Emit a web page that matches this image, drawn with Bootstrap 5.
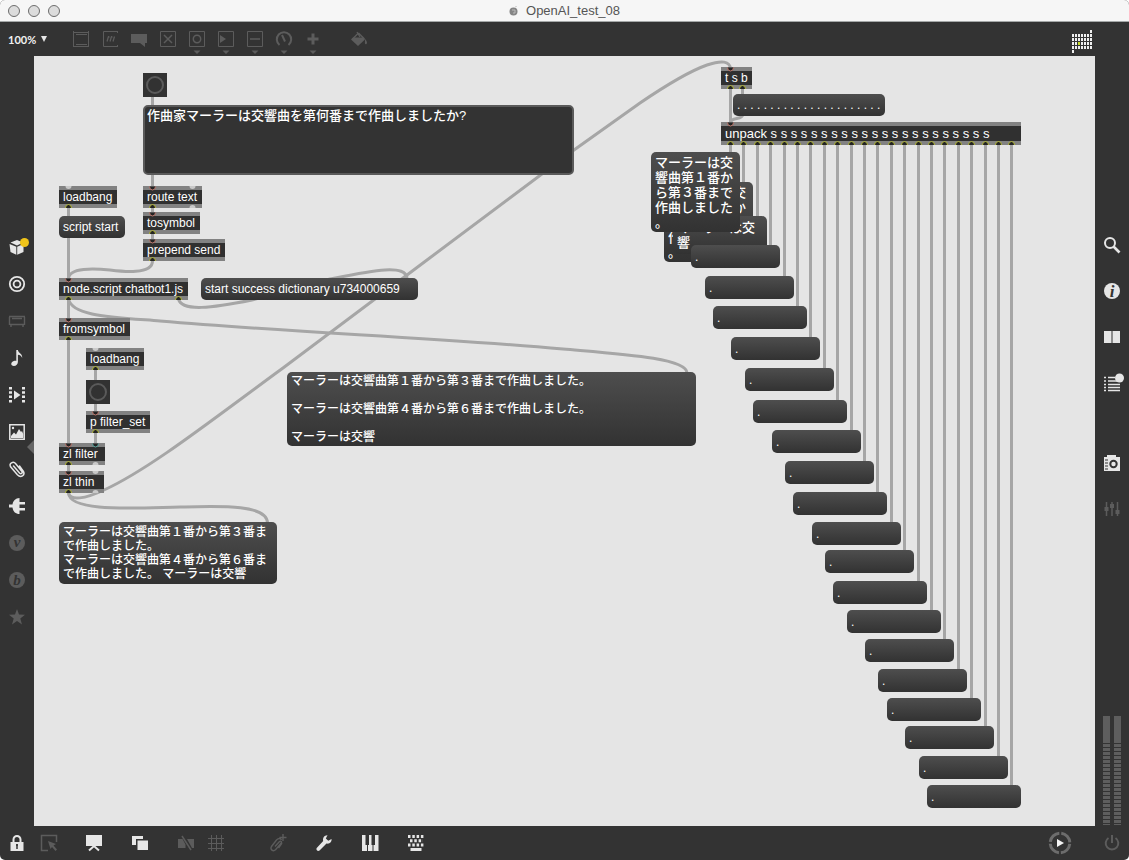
<!DOCTYPE html>
<html lang="ja">
<head>
<meta charset="utf-8">
<meta name="viewport" content="width=device-width, initial-scale=1">
<title>OpenAI_test_08</title>
<link href="https://cdn.jsdelivr.net/npm/bootstrap@5.3.0/dist/css/bootstrap.min.css" rel="stylesheet">
<style>
  :root { --chrome: #333333; --on: #e6e6e6; --off: #5c5c5c; --cord: #a6a6a6; }
  body { background: #fff; font-family: "Liberation Sans", "Noto Sans CJK JP", sans-serif; font-size: 12px; }
  .patch-window { background: var(--chrome); border-radius: 5px; overflow: hidden; }
  .title-strip { height: 22px; background: #f6f6f6; border-bottom: 1px solid #a5a8a8; font-size: 13px; color: #555; }
  .lights { left: 8px; top: 5px; }
  .light { width: 12px; height: 12px; border-radius: 50%; background: #dcdcdc; border: 1px solid #6c6c6c; padding: 0; }
  .tool-strip, .foot-strip { height: 34px; color: var(--on); }
  .foot-strip { padding: 0 2px; }
  .side-strip { width: 34px; color: var(--on); }
  .left-strip { padding-bottom: 18px; }
  .right-strip { padding-top: 166px; }
  .ib { border: 0; background: none; padding: 0; color: inherit; display: flex; align-items: center; justify-content: center; flex: none; }
  .ib.dim { color: var(--off); }
  .ib text { font-family: "Liberation Serif", serif; font-weight: bold; font-style: italic; text-anchor: middle; }
  .tool-strip .ib { width: 29px; height: 34px; }
  .foot-strip .ib { width: 30px; height: 34px; }
  .left-strip .ib { width: 34px; height: 37px; }
  .right-strip .ib { width: 34px; height: 46px; }
  .zoom-pick { width: 66px; padding-left: 8px; gap: 4px; }
  .zoom-pick select { appearance: none; border: 0; background: transparent; color: #f2f2f2; font: bold 11px Lato, sans-serif; padding: 0; width: 29px; }
  .fill-tool { margin-left: 17px; }
  .tool-strip .grid-logo { margin-right: 32px; padding-top: 5px; }
  .notch { right: 0; top: 384px; }
  .cam-gap { margin-top: 34px; }
  .levels { gap: 4px; margin-bottom: 1px; }
  .level { width: 7px; height: 109px; background: linear-gradient(#5e5e5e 24px, transparent 24px), repeating-linear-gradient(#5e5e5e 0 3px, var(--chrome) 3px 4px); }
  .lock-gap { margin-left: 2px; }
  .notes-gap { margin-left: 15px; }
  .wide-gap { margin-left: 16px; }
  .clip-gap { margin-left: 32px; }
  .play-gap { margin-right: 22px; }
  .patcher { background: #e5e5e5; }
  .patcher svg.layer { left: 0; top: 0; width: 100%; height: 100%; pointer-events: none; }
  .cord { fill: none; stroke: var(--cord); stroke-width: 3; }
  .node { position: absolute; color: #fff; font-weight: 500; white-space: pre; text-align: left; overflow: hidden; }
  .obj { background: #303030; border: solid #828282; border-width: 4px 0; padding: 0 4px; line-height: 15px; }
  .msg { border: 0; border-radius: 5px; background: linear-gradient(#4e4e4e, #323232); padding: 0 4px; line-height: 14px; }
  .f13 { font-size: 13px; line-height: 15px; }
  .bang { background: #323232; border: 0; padding: 3px; }
  .bang::before { content: ""; display: block; width: 18px; height: 18px; border: 2px solid #5a5a5a; border-radius: 50%; }
  .edit { background: #333; border: 2px solid #5a5a5a; border-radius: 5px; padding: 1px 2px; font-size: 13px; line-height: 15px; resize: none; }
</style>
<script src="https://cdn.jsdelivr.net/npm/bootstrap@5.3.0/dist/js/bootstrap.bundle.min.js"></script>
</head>
<body>
<div class="patch-window d-flex flex-column min-vh-100">

  <header class="title-strip position-relative d-flex align-items-center justify-content-center flex-shrink-0">
    <div class="lights position-absolute d-flex gap-2">
      <button class="light" aria-label="Close"></button>
      <button class="light" aria-label="Minimise"></button>
      <button class="light" aria-label="Zoom"></button>
    </div>
    <svg class="me-2" width="9" height="10" viewBox="0 0 9 10" aria-hidden="true"><circle cx="4.500" cy="5.500" r="4" fill="#858585"/><path d="M3 4h3v3H4" fill="none" stroke="#bbb"/><path d="M6 1l2-1" stroke="#ccc"/></svg>
    <span>OpenAI_test_08</span>
  </header>

  <nav class="tool-strip d-flex align-items-center flex-shrink-0" aria-label="Objects">
    <label class="zoom-pick d-flex align-items-center"><select aria-label="Zoom level"><option>100%</option></select><svg width="6" height="6" viewBox="0 0 6 6" aria-hidden="true"><path d="M0 0h6L3 6z" fill="currentColor"/></svg></label>
    <button class="ib dim" aria-label="Object"><svg width="18" height="26" viewBox="0 0 18 26" fill="none" stroke="currentColor"><path d="M1.500 5v16M1 6.500h16M16.500 5v16M1 20.500h16M4 8.500h11M4 18.500h11"/></svg></button>
    <button class="ib dim" aria-label="Message"><svg width="18" height="26" viewBox="0 0 18 26" fill="none" stroke="currentColor"><path d="M17 5.500H2.500v15H17M16.500 5v2M16.500 19v2"/><path d="M6 15.500l1.500-5M9 15.500l1.500-5M12 15.500l1.500-5M7 11h1.500M10 11h1.500" stroke-width="1.300"/></svg></button>
    <button class="ib dim" aria-label="Comment"><svg width="18" height="26" viewBox="0 0 18 26" fill="currentColor"><path d="M1 8h16v9h-2v4l-5-4H1z"/></svg></button>
    <button class="ib dim" aria-label="Toggle"><svg width="18" height="26" viewBox="0 0 18 26" fill="none" stroke="currentColor"><path d="M1.500 5.500h15v15h-15z"/><path d="M5 9l8 8M13 9l-8 8" stroke-width="1.500"/></svg></button>
    <button class="ib dim" aria-label="Button"><svg width="18" height="32" viewBox="0 0 18 32" fill="none" stroke="currentColor"><path d="M1.500 8.500h15v15h-15z"/><circle cx="9" cy="16" r="3.700" stroke-width="1.500"/><path d="M5.500 27.500h7L9 31z" fill="currentColor" stroke="none"/></svg></button>
    <button class="ib dim" aria-label="Playback"><svg width="18" height="32" viewBox="0 0 18 32" fill="none" stroke="currentColor"><path d="M1.500 8.500h15v15h-15z"/><path d="M3 12l6 4-6 4zM5.500 27.500h7L9 31z" fill="currentColor" stroke="none"/></svg></button>
    <button class="ib dim" aria-label="Slider"><svg width="18" height="32" viewBox="0 0 18 32" fill="none" stroke="currentColor"><path d="M1.500 8.500h15v15h-15z"/><path d="M4 16h10" stroke-width="1.500"/><path d="M5.500 27.500h7L9 31z" fill="currentColor" stroke="none"/></svg></button>
    <button class="ib dim" aria-label="Dial"><svg width="18" height="32" viewBox="0 0 18 32" fill="none" stroke="currentColor"><path d="M4.500 22a7.200 7.200 0 1 1 9 0" stroke-width="2"/><path d="M7 12l3 6.500" stroke-width="2"/><path d="M5.500 27.500h7L9 31z" fill="currentColor" stroke="none"/></svg></button>
    <button class="ib dim" aria-label="Add"><svg width="18" height="32" viewBox="0 0 18 32" fill="none" stroke="currentColor"><path d="M9 10.500v11M3.500 16h11" stroke-width="3"/><path d="M5.500 27.500h7L9 31z" fill="currentColor" stroke="none"/></svg></button>
    <button class="ib dim fill-tool" aria-label="Format"><svg width="18" height="18" viewBox="0 0 18 18"><path d="M1 9.500l2-2h10l2 2-7 6.500z" fill="currentColor"/><path d="M8.500 3L2 9.500M8.500 3l6 6M7 2l3 5" fill="none" stroke="currentColor" stroke-width="1.300"/><path d="M15 9c2 2 2.500 4 1.500 5s-2-.5-1.500-2z" fill="currentColor"/></svg></button>
    <button class="ib grid-logo ms-auto" aria-label="Package"><svg width="21" height="24" viewBox="0 0 21 24" fill="#efefef"><g id="logoDots"></g></svg></button>
  </nav>

  <div class="d-flex flex-grow-1">
    <nav class="side-strip left-strip position-relative d-flex flex-column justify-content-center flex-shrink-0" aria-label="Browsers">
      <button class="ib" aria-label="Packages"><svg width="24" height="20" viewBox="0 0 24 20"><path d="M5.500 5.500L12 3l6 2.500-6 3zM4.500 7l6.800 2.800v8L5.500 15zM18.500 7l-6.300 2.800v8L18.500 15z" fill="currentColor"/><circle cx="19.500" cy="5.500" r="4.500" fill="#f0c419"/></svg></button>
      <button class="ib" aria-label="Objects"><svg width="18" height="18" viewBox="0 0 18 18" fill="none" stroke="currentColor" stroke-width="1.800"><circle cx="9" cy="9" r="7.200"/><circle cx="9" cy="9" r="3.400"/></svg></button>
      <button class="ib dim" aria-label="Beap"><svg width="18" height="18" viewBox="0 0 18 18" fill="none" stroke="currentColor"><path d="M1 4.500h16M1.500 5v8M16.500 5v8M2 12.500h14M4 6.500h10M3 13v2M15 13v2" stroke-width="1.400"/></svg></button>
      <button class="ib" aria-label="Audio"><svg width="18" height="18" viewBox="0 0 18 18"><path d="M8.300 1h1.600c.3 3 4.800 3.500 4.300 8-.7-2.200-2-3-4.300-3.300V13c0 2.300-1.800 4-4 4-3.500 0-3.500-4 0-5 .8-.3 1.800-.3 2.400 0z" fill="currentColor"/></svg></button>
      <button class="ib" aria-label="Video"><svg width="18" height="18" viewBox="0 0 18 18"><path d="M2.500 1v17M15.500 1v17" fill="none" stroke="currentColor" stroke-width="3" stroke-dasharray="2.500 1.800"/><path d="M6 4.500l6.500 4.500L6 13.500z" fill="currentColor"/></svg></button>
      <button class="ib" aria-label="Images"><svg width="18" height="18" viewBox="0 0 18 18"><path d="M1.800 1.800h14.400v14.400H1.800z" fill="none" stroke="currentColor" stroke-width="1.500"/><path d="M3 15v-2l3-3.500 2 2L11 6l2 3 1-1 1.200 3v4z" fill="currentColor"/><circle cx="5" cy="5" r="1.200" fill="currentColor"/></svg></button>
      <button class="ib" aria-label="Clippings"><svg width="18" height="18" viewBox="0 0 18 18" fill="none" stroke="currentColor" stroke-width="1.500" stroke-linecap="round"><path d="M5.500 6l6 7c1.500 1.500 3.500 0 2.300-1.700L7.500 3.500C5.500 1 .5 3 2.600 6.800l6.800 8c3.500 3.500 8 .5 6-3.500L11.500 6"/></svg></button>
      <button class="ib" aria-label="Plug-ins"><svg width="18" height="18" viewBox="0 0 18 18" fill="currentColor"><path d="M1 7.500h3.500C5 4 7.500 1 11.500 1v4H17v2.500h-5.500v3.500H17v2.500h-5.500V17c-4 0-6.500-2.500-7-6.500H1z"/></svg></button>
      <button class="ib dim" aria-label="Vizzie"><svg width="18" height="18" viewBox="0 0 18 18"><circle cx="9" cy="9" r="8" fill="currentColor"/><text x="9" y="13" font-size="15" fill="#333">v</text></svg></button>
      <button class="ib dim" aria-label="Modules"><svg width="18" height="18" viewBox="0 0 18 18"><circle cx="9" cy="9" r="8" fill="currentColor"/><text x="9" y="14" font-size="15" fill="#333">b</text></svg></button>
      <button class="ib dim" aria-label="Favourites"><svg width="18" height="18" viewBox="0 0 18 18" fill="currentColor"><path d="M9 1l2 5.500 6 .3-4.700 3.700 1.700 5.900-5-3.400-5 3.400 1.700-5.900L1 6.800l6-.3z"/></svg></button>
      <button class="ib notch position-absolute w-auto h-auto dim" aria-label="Open browser"><svg width="7" height="14" viewBox="0 0 7 14"><path d="M7 0v14L0 7z" fill="#666"/></svg></button>
    </nav>

    <main class="patcher position-relative flex-grow-1" id="patcher">
      <svg class="layer position-absolute" aria-hidden="true"><g id="cords" transform="translate(-34 -56)">
        <path class="cord" d="M152.500 97v8M152.500 175v12M152.500 207v6M152.500 233v7"/>
        <path class="cord" d="M152.500 261C152.500 275 122 271.500 110 270C95 268.500 68.500 267 68.500 279"/>
        <path class="cord" d="M68.500 207v72M68.500 299v20M68.500 339v105M68.500 464v8"/>
        <path class="cord" d="M95.500 369v12M95.500 404v8M95.500 432v12"/>
        <path class="cord" d="M178.500 299C182 312 212 308 252 300L330 279C370 271 407 263 407 279"/>
        <path class="cord" d="M68.500 299C72 316 110 317 160 321C300 333 430 337 563 349C620 354 687 358 687 373"/>
        <path class="cord" d="M68.500 493C70 501 85 499 104 490C150 469 213 419 283 368L427 260L574 150L640 103C665 86 690 71 707 65C722 60 730 61 730.500 69"/>
        <path class="cord" d="M68.500 493C70 512 130 508 180 507C220 506 267 504 267.500 523"/>
        <path class="cord" d="M730.500 88v36M742.500 88v8M742.500 115C742.500 120 731 117 731 122"/>
      </g></svg>
      <div id="nodes"></div>
      <svg class="layer position-absolute" aria-hidden="true"><g id="ports" transform="translate(-34 -56)"></g></svg>
    </main>

    <nav class="side-strip right-strip d-flex flex-column align-items-center flex-shrink-0" aria-label="Panels">
      <button class="ib" aria-label="Search"><svg width="18" height="18" viewBox="0 0 18 18" fill="none" stroke="currentColor"><circle cx="7" cy="7" r="5" stroke-width="2"/><path d="M10.500 10.500l6 6" stroke-width="2.600"/></svg></button>
      <button class="ib" aria-label="Inspector"><svg width="18" height="18" viewBox="0 0 18 18"><circle cx="9" cy="9" r="8" fill="currentColor"/><text x="9" y="14.500" font-size="17" fill="#333">i</text></svg></button>
      <button class="ib" aria-label="Reference"><svg width="18" height="18" viewBox="0 0 18 18" fill="currentColor"><path d="M1 3h7.500v12H1zM9.500 3H17v12H9.500z"/></svg></button>
      <button class="ib" aria-label="Console"><svg width="26" height="20" viewBox="0 0 26 20"><path d="M5 4.500h2M5 8h2M5 11.500h2M5 14.500h2M5 17.500h2M9 4.500h7M9 8h9M9 11.500h12M9 14.500h12M9 17.500h12" fill="none" stroke="currentColor" stroke-width="1.500"/><circle cx="20.500" cy="5" r="4.500" fill="currentColor"/></svg></button>
      <button class="ib cam-gap" aria-label="Snapshots"><svg width="18" height="18" viewBox="0 0 18 18"><path d="M4 1h9v2h4v14H1V3h3z" fill="currentColor"/><circle cx="10.500" cy="10" r="3.200" fill="none" stroke="#333" stroke-width="2"/><path d="M2 6h3M2 9h3M2 12h3M2 15h3" stroke="#333" stroke-width="1.200"/></svg></button>
      <button class="ib dim" aria-label="Parameters"><svg width="18" height="18" viewBox="0 0 18 18" fill="none" stroke="currentColor"><path d="M3.500 2v14M9 2v14M14.500 2v14" stroke-width="1.500"/><path d="M3.500 7v4M9 4v4M14.500 10v4" stroke-width="4"/></svg></button>
      <div class="levels d-flex mt-auto" role="img" aria-label="Output level"><span class="level"></span><span class="level"></span></div>
    </nav>
  </div>

  <footer class="foot-strip d-flex align-items-center flex-shrink-0">
    <button class="ib" aria-label="Lock"><svg width="18" height="18" viewBox="0 0 18 18"><path d="M5.500 9V5.500a3.500 3.500 0 0 1 7 0V9" fill="none" stroke="currentColor" stroke-width="2"/><path d="M2.500 8h13v9h-13z" fill="currentColor"/><path d="M9 10v5M8 11h2" stroke="#333" stroke-width="1.500"/></svg></button>
    <button class="ib dim lock-gap" aria-label="Operate"><svg width="18" height="18" viewBox="0 0 18 18"><path d="M8 16.500H1.500v-15h15V8" fill="none" stroke="currentColor" stroke-width="1.500"/><path d="M8 7l8 3-2.500 1.500 3.500 4-1.500 1.500-3.500-4L10.500 15z" fill="currentColor"/></svg></button>
    <button class="ib notes-gap" aria-label="Presentation"><svg width="18" height="18" viewBox="0 0 18 18"><path d="M1 1h16v11H1z" fill="currentColor"/><path d="M4 16.500L9 12l5 4.500" fill="none" stroke="currentColor" stroke-width="2"/></svg></button>
    <button class="ib wide-gap" aria-label="Windows"><svg width="18" height="18" viewBox="0 0 18 18" fill="currentColor"><path d="M1 2h11v3H5v6H1zM6.500 6.500H17V16H6.500z"/></svg></button>
    <button class="ib dim wide-gap" aria-label="Hide cords"><svg width="18" height="18" viewBox="0 0 18 18"><path d="M1 5h4.500l3 5.500V14H1zM10 5h7v9h-2z" fill="currentColor"/><path d="M5 2l9 14" stroke="currentColor" stroke-width="1.500"/></svg></button>
    <button class="ib dim" aria-label="Grid"><svg width="18" height="18" viewBox="0 0 18 18" fill="none" stroke="currentColor"><path d="M4.500 1v16M9.500 1v16M14.500 1v16M1 4.500h16M1 9.500h16M1 14.500h16"/></svg></button>
    <button class="ib dim clip-gap" aria-label="Add clipping"><svg width="18" height="18" viewBox="0 0 18 18" fill="none" stroke="currentColor" stroke-width="1.400"><path d="M6 12.500l4.500-5c1.300-1 2.500.3 1.800 1.500L6.500 15.800C4 18 .8 15.500 2.500 12.500L7.500 6c2-2 4-2 5 0M13 9l-3.500 5M14 0v7M10.500 3.500h7"/></svg></button>
    <button class="ib wide-gap" aria-label="Tools"><svg width="18" height="18" viewBox="0 0 18 18" fill="currentColor"><path d="M12.500 1.200L10.800 4.500l2.500 2.300L16.500 5c.5 3-2 5.300-5 4.500L4.500 16.500c-1.500 1.300-4-.7-2.800-2.500l6.500-7C7.300 4 9.500 1 12.500 1.200z"/></svg></button>
    <button class="ib wide-gap" aria-label="MIDI keyboard"><svg width="18" height="18" viewBox="0 0 18 18" fill="currentColor"><path d="M1 1h3.500v10H6v6H1zM7 11h1V1h2.500v10h1v6H7zM14 1h3.500v16h-5v-6H14z"/></svg></button>
    <button class="ib wide-gap" aria-label="Computer keyboard"><svg width="18" height="18" viewBox="0 0 18 18" fill="none" stroke="currentColor"><path d="M1 2.500h16M1 11h16" stroke-width="3" stroke-dasharray="2.500 1.800"/><path d="M3 6.700h13" stroke-width="3" stroke-dasharray="2.500 1.800"/><path d="M3.500 15.500h11" stroke-width="3"/></svg></button>
    <button class="ib ms-auto play-gap" aria-label="Play"><svg width="24" height="24" viewBox="0 0 24 24"><circle cx="12" cy="12" r="9.800" fill="none" stroke="#6c6c6c" stroke-width="3" stroke-dasharray="13.400 2" stroke-dashoffset="-1"/><path d="M9 8l7 4-7 4z" fill="#f4f4f4"/></svg></button>
    <button class="ib dim" aria-label="Audio power"><svg width="18" height="18" viewBox="0 0 18 18" fill="none" stroke="currentColor" stroke-width="2"><path d="M5.500 4a6.300 6.300 0 1 0 7 0M9 1v8"/></svg></button>
  </footer>
</div>

<script>
// Patcher contents: [kind, x, y, width, height, text, label or extra class]
const nodes = [
  ['bang', 143, 73, 24, 24, '', 'Send prompt'],
  ['edit', 143, 105, 431, 70, '作曲家マーラーは交響曲を第何番まで作曲しましたか?'],
  ['obj', 59, 186, 58, 22, 'loadbang'],
  ['msg', 59, 216, 66, 22, 'script start'],
  ['obj', 143, 186, 59, 22, 'route text'],
  ['obj', 143, 212, 57, 22, 'tosymbol'],
  ['obj', 143, 239, 82, 22, 'prepend send'],
  ['obj', 59, 278, 129, 22, 'node.script chatbot1.js'],
  ['msg', 201, 278, 217, 22, 'start success dictionary u734000659'],
  ['obj', 59, 318, 71, 22, 'fromsymbol'],
  ['obj', 86, 348, 58, 22, 'loadbang'],
  ['bang', 86, 380, 24, 24, '', 'Set filter'],
  ['obj', 86, 411, 64, 22, 'p filter_set'],
  ['obj', 59, 443, 46, 22, 'zl filter'],
  ['obj', 59, 471, 45, 22, 'zl thin'],
  ['msg', 59, 522, 218, 62, 'マーラーは交響曲第１番から第３番ま\nで作曲しました。\nマーラーは交響曲第４番から第６番ま\nで作曲しました。 マーラーは交響'],
  ['msg', 287, 372, 409, 74, 'マーラーは交響曲第１番から第３番まで作曲しました。\n\nマーラーは交響曲第４番から第６番まで作曲しました。\n\nマーラーは交響'],
  ['obj', 721, 67, 31, 22, 't s b'],
  ['msg', 733, 94, 152, 22, Array(22).fill('.').join(' ')],
  ['obj', 721, 122, 300, 23, 'unpack' + ' s'.repeat(22), 'f13'],
  ['msg', 664, 182, 89, 80, 'マーラーは交\n響曲第４番か\nら第６番まで\n作曲しました\n。', 'f13'],
  ['msg', 673, 216, 94, 38, 'マーラーは交\n響', 'f13'],
  ['msg', 651, 152, 89, 80, 'マーラーは交\n響曲第１番か\nら第３番まで\n作曲しました\n。', 'f13'],
];
// The unpacked list items, one message box per outlet from the fourth on
const items = [[691,245,89],[705,276,89],[713,306,94],[731,337,89],[745,368,89],[753,400,94],[772,430,89],
  [785,461,89],[793,492,94],[812,522,89],[825,550,89],[833,581,94],[847,610,94],[865,639,89],[878,669,89],
  [887,698,94],[905,726,89],[919,756,89],[927,785,94]];
items.forEach(([x, y, w]) => nodes.push(['msg', x, y, w, 23, '.']));

const host = document.getElementById('nodes');
for (const [kind, x, y, w, h, text, extra] of nodes) {
  const tag = kind === 'obj' ? 'div' : kind === 'edit' ? 'textarea' : 'button';
  const el = document.createElement(tag);
  el.className = 'node ' + kind + (extra === 'f13' ? ' f13' : '');
  el.textContent = text;
  if (kind === 'bang') el.setAttribute('aria-label', extra);
  if (kind === 'edit') el.setAttribute('aria-label', 'Prompt');
  el.style.cssText = `left:${x - 34}px;top:${y - 56}px;width:${w}px;height:${h}px`;
  host.append(el);
}

const NS = 'http://www.w3.org/2000/svg';
function draw(parent, tag, attrs) {
  const el = document.createElementNS(NS, tag);
  for (const k in attrs) el.setAttribute(k, attrs[k]);
  document.getElementById(parent).append(el);
}
const inlet = (x, y, c = '#c07a70') => draw('ports', 'path', { d: `M${x-3} ${y+.5}A3 3.500 0 0 0 ${x+3} ${y+.5}`, fill: '#242424', stroke: c });
const outlet = (x, y) => draw('ports', 'path', { d: `M${x-3} ${y}A3 3.500 0 0 1 ${x+3} ${y}`, fill: '#242424', stroke: '#b8bd3c' });
const freeIn = (x, y) => draw('ports', 'path', { d: `M${x-3} ${y}A3 3 0 0 0 ${x+3} ${y}`, fill: '#c9c9c9' });
const freeOut = (x, y) => draw('ports', 'path', { d: `M${x-3} ${y}A3 3 0 0 1 ${x+3} ${y}`, fill: '#c9c9c9' });

// List cords fall straight from each outlet to the box below it
const tops = [152, 182, 216, ...items.map(i => i[1])];
tops.forEach((top, i) => {
  const x = Math.round(730 + 13.4 * i) + .5;
  draw('cords', 'path', { class: 'cord', d: `M${x} 144V${top + 2}` });
  outlet(x, 145);
});
[[152.5,186],[152.5,212],[152.5,239],[68.5,278],[68.5,318],[95.5,411],[68.5,443],[68.5,471],[730.5,67],[730.5,122]].forEach(p => inlet(...p));
inlet(95.5, 443, '#5aa8a0');
[[68.5,208],[152.5,208],[152.5,234],[152.5,261],[68.5,300],[178.5,300],[68.5,340],[95.5,370],[95.5,433],[68.5,465],[68.5,493],[730.5,89],[742.5,89]].forEach(p => outlet(...p));
[[68.5,186],[192.5,186],[95.5,348],[95.5,471]].forEach(p => freeIn(...p));
[[192.5,208],[95.5,465],[95.5,493]].forEach(p => freeOut(...p));

// Dot-matrix logo in the tool strip
const dot = (c, r, f = '#efefef') => draw('logoDots', 'rect', { x: c * 3, y: 4 * r, width: 2, height: 3, fill: f });
for (let r = 1; r < 5; r++) for (let c = 0; c < 7; c++) dot(c, r, r === 3 && c === 2 ? '#c8dc28' : '#efefef');
dot(6, 0); dot(0, 5);
</script>
</body>
</html>
